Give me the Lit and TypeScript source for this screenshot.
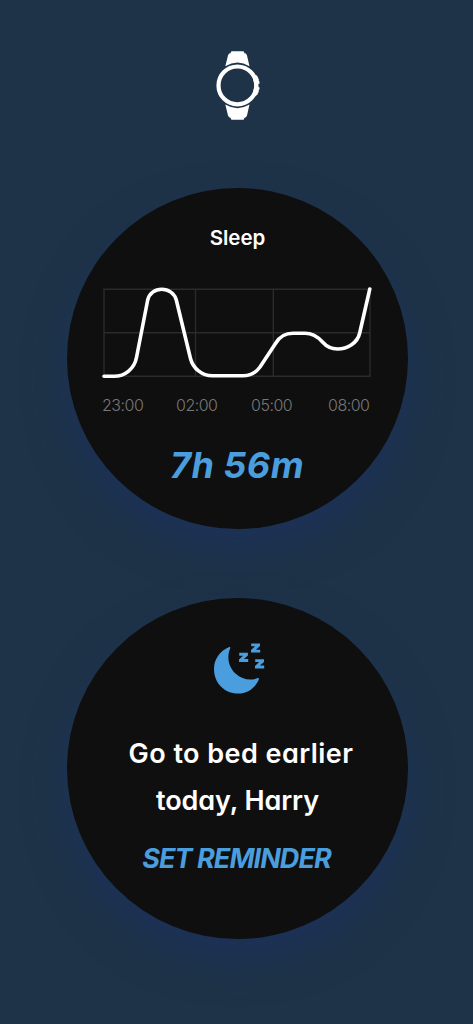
import { LitElement, html, css } from "lit";
import { customElement } from "lit/decorators.js";

@customElement("watch-icon")
class WatchIcon extends LitElement {
  static styles = css`
    :host { display: block; width: 45px; height: 70px; }
    svg { display: block; }
  `;
  render() {
    return html`<svg width="45" height="70" viewBox="0 0 45 70" fill="#fff">
      <path d="M10.300 15.200L13 4.500Q13.500 2.600 15.600 2.100L16.400 .3H28.600L29.400 2.100Q31.500 2.600 32 4.500L34.500 15.200Q22.500 8 10.300 15.200Z" />
      <path d="M10.300 53.600L13 64.500Q13.500 66.400 15.600 66.900L16.400 68.700H28.600L29.400 66.900Q31.500 66.400 32 64.500L34.500 53.600Q22.500 60.800 10.300 53.600Z" />
      <circle cx="22.400" cy="34.400" r="18.900" fill="none" stroke="#fff" stroke-width="4.200" />
      <path d="M36.500 20.500L40.300 24.300L42 24.500L43.800 28.200V30L44.500 30.500V32.400L43.200 33V35.800L44.500 36.400V38.300L43.800 38.800V40.600L42 44.300L40.300 44.500L36.500 48.300L39.500 34.400Z" />
    </svg>`;
  }
}

@customElement("sleep-chart")
class SleepChart extends LitElement {
  static styles = css`
    :host { display: block; width: 271px; }
    svg { display: block; }
    .grid { stroke: #2b2b2b; stroke-width: 1.4; fill: none; }
    .curve { stroke: #fff; stroke-width: 3.6; fill: none; stroke-linecap: round; stroke-linejoin: round; }
    .hours {
      display: grid;
      grid-template-columns: 74px 75px 77px auto;
      margin-top: 14px;
      font-size: 16px;
      line-height: 22px;
      font-weight: 300;
      letter-spacing: -0.5px;
      color: #777;
    }
  `;
  render() {
    return html`
      <svg width="271" height="94" viewBox="102 286 271 94">
        <path class="grid" d="M104 289.2H370V376.3H104ZM104 332.7H370M195.5 289.2V376.3M273.3 289.2V376.3" />
        <path
          class="curve"
          d="M104 376.3H114C125 376.3 134.500 368.500 136.500 357.500L147.700 300C149.200 293.500 155 289.200 161.700 289.200C168.500 289.200 174.500 293.500 176.300 300L190.500 358.500C193 368.500 202 375.800 212.500 375.800H243C250 375.800 256 372.500 260 367L275.500 343.500C279.500 336.700 286 333.300 293 333.300H305C312 333.300 317.500 336.500 322.500 342C326.500 346.500 331 349 337.500 349C347.500 349 357.500 343 359.700 333L369.800 289"
        />
      </svg>
      <div class="hours"><span>23:00</span><span>02:00</span><span>05:00</span><span>08:00</span></div>
    `;
  }
}

@customElement("moon-icon")
class MoonIcon extends LitElement {
  static styles = css`
    :host { display: block; }
    svg { display: block; }
  `;
  render() {
    return html`<svg width="55" height="52" viewBox="210 642 55 52" fill="#4a9ede">
      <path d="M229.300 647C219.500 651 214 659.500 214 669C214 683 224.500 693.600 238 693.600C247.500 693.600 255.300 688 258.900 679.200C259.200 678.300 258.500 677.700 257.600 678.100C250.500 681 242 679.500 235.500 673.500C228.500 667 226.500 657 230.200 648.200C230.600 647.200 230.200 646.700 229.300 647Z" />
      <path d="M239.200 652.800H247.900V655.500L243.900 659.100H248.200V662H239V659.400L243 655.700H239.200Z" />
      <path d="M251.200 643.400H260V646.100L255.900 649.700H260.200V652.600H251V650L255.100 646.300H251.200Z" />
      <path d="M255.200 659.200H264V661.900L259.900 665.600H264.200V668.500H255V665.900L259.100 662.100H255.200Z" />
    </svg>`;
  }
}

@customElement("app-root")
class AppRoot extends LitElement {
  static styles = css`
    :host {
      display: flex;
      flex-direction: column;
      align-items: center;
      box-sizing: border-box;
      height: 1024px;
      padding: 51px 0 0 2px;
      overflow: hidden;
      background: #1e3347;
      font-family: Inter, "Open Sans", sans-serif;
      font-feature-settings: "cv11";
      color: #fff;
    }
    .dial {
      display: flex;
      flex-direction: column;
      align-items: center;
      box-sizing: border-box;
      flex: none;
      width: 341px;
      height: 341px;
      border-radius: 50%;
      background: #0f0f0f;
      box-shadow: 0 20px 40px rgba(27, 48, 100, 0.6);
      white-space: nowrap;
    }
    .sleep { margin-top: 67px; padding-top: 36px; }
    .reminder { margin-top: 68.500px; padding-top: 44px; }
    .title { font-size: 20.500px; line-height: 28px; font-weight: 600; }
    .sleep sleep-chart { margin-top: 34px; }
    .total { margin-top: 27px; padding-right: 1px; font-size: 36px; line-height: 44px; font-weight: 700; font-style: italic; letter-spacing: 0.5px; color: #4a9ede; }
    .message { display: flex; flex-direction: column; align-items: center; margin-top: 36px; font-size: 27px; line-height: 47px; font-weight: 600; }
    .lead { padding-left: 7px; letter-spacing: 0.45px; }
    .name { letter-spacing: -0.1px; }
    .action { margin-top: 18px; padding-right: 2px; font-size: 27px; line-height: 34px; font-weight: 700; font-style: italic; letter-spacing: -0.95px; color: #4a9ede; }
  `;
  render() {
    return html`
      <watch-icon></watch-icon>
      <section class="dial sleep">
        <div class="title">Sleep</div>
        <sleep-chart></sleep-chart>
        <div class="total">7h 56m</div>
      </section>
      <section class="dial reminder">
        <moon-icon></moon-icon>
        <div class="message"><span class="lead">Go to bed earlier</span><span class="name">today, Harry</span></div>
        <div class="action">SET REMINDER</div>
      </section>
    `;
  }
}
